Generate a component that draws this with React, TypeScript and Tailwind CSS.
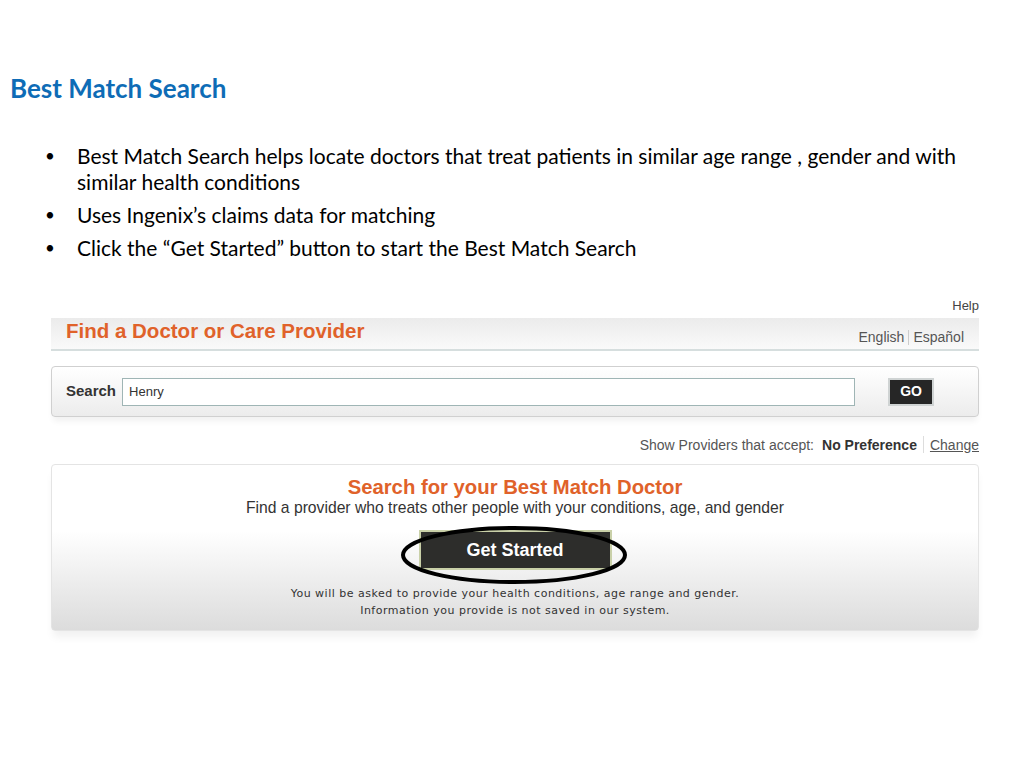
const bullets = [
  "Best Match Search helps locate doctors that treat patients in similar age range , gender and with similar health conditions",
  "Uses Ingenix’s claims data for matching",
  "Click the “Get Started” button to start the Best Match Search",
];

const arial = "font-['Liberation_Sans',Arial,sans-serif]";

export default function App() {
  return (
    <div className="w-[1024px] h-[768px] bg-white overflow-hidden relative font-['Lato',sans-serif]">
      <h1 className="pt-[72px] pl-[10px] text-[26px] leading-[32px] font-bold text-[#0e6cb6]">
        Best Match Search
      </h1>

      <ul className="mt-[39px] pl-[77px] pr-[40px] text-[21px] leading-[26px] text-black">
        {bullets.map((b) => (
          <li key={b} className="relative mb-[7px]">
            <span className="absolute -left-[32px] top-0 text-[17px]">•</span>
            {b}
          </li>
        ))}
      </ul>

      <div className={`mx-[45px] mt-[37px] ${arial}`}>
        <div className="flex justify-end text-[13px] leading-[16px] text-[#444]">Help</div>

        {/* header bar */}
        <div className="mt-[4px] ml-[6px] h-[33px] flex items-start justify-between px-[15px] bg-gradient-to-b from-[#ebebeb] to-[#fafafa] border-b-2 border-[#d6dede]">
          <span className="text-[20.5px] leading-[26px] font-bold text-[#e0622a]">
            Find a Doctor or Care Provider
          </span>
          <span className="mt-[11px] text-[14px] leading-[16px] text-[#555] flex items-center">
            English
            <span className="mx-[4px] h-[15px] border-l border-[#ccc]" />
            Español
          </span>
        </div>

        {/* search box */}
        <div className="mt-[15px] ml-[6px] h-[51px] rounded-[4px] border border-[#d0d0d0] bg-gradient-to-b from-white to-[#ececec] shadow-[0_6px_6px_-2px_rgba(0,0,0,0.06)] flex items-center px-[14px]">
          <span className="text-[15px] font-bold text-[#333]">Search</span>
          <div className="ml-[6px] w-[733px] h-[28px] border border-[#9fb5b5] bg-white flex items-center px-[6px] text-[13px] text-[#333]">
            Henry
          </div>
          <button className="ml-[33px] w-[46px] h-[28px] bg-[#262626] border-2 border-[#cfd3d3] text-white text-[14px] font-bold">
            GO
          </button>
        </div>

        <div className="mt-[19px] flex justify-end items-center text-[14px] leading-[16px] text-[#555]">
          Show Providers that accept:
          <span className="ml-[8px] font-bold text-[#333]">No Preference</span>
          <span className="mx-[6px] h-[17px] border-l border-[#ddd]" />
          <span className="underline">Change</span>
        </div>

        {/* best match panel */}
        <div className="mt-[11px] ml-[6px] h-[167px] rounded-[4px] border border-[#e4e4e4] bg-gradient-to-b from-white via-white via-[40%] to-[#dcdcdc] shadow-[0_8px_8px_-2px_rgba(0,0,0,0.06)] flex flex-col items-center pt-[10px]">
          <div className="text-[20.3px] leading-[24px] font-bold text-[#e0622a]">
            Search for your Best Match Doctor
          </div>
          <div className="text-[15.7px] leading-[18px] text-[#333]">
            Find a provider who treats other people with your conditions, age, and gender
          </div>
          <div className="relative mt-[13px]">
            <button className="w-[193px] h-[40px] bg-[#2d2d2b] border-2 border-[#c9d0a8] text-white text-[18px] font-bold">
              Get Started
            </button>
            <svg
              className="absolute -left-[20px] -top-[5px] pointer-events-none"
              width="232"
              height="60"
              viewBox="0 0 232 60"
            >
              <ellipse cx="115" cy="30" rx="111" ry="27" fill="none" stroke="black" strokeWidth="4" />
            </svg>
          </div>
          <div className="mt-[15px] text-center text-[11px] leading-[17px] tracking-[0.5px] text-[#333] font-['DejaVu_Sans',Verdana,sans-serif]">
            You will be asked to provide your health conditions, age range and gender.
            <br />
            Information you provide is not saved in our system.
          </div>
        </div>
      </div>
    </div>
  );
}
